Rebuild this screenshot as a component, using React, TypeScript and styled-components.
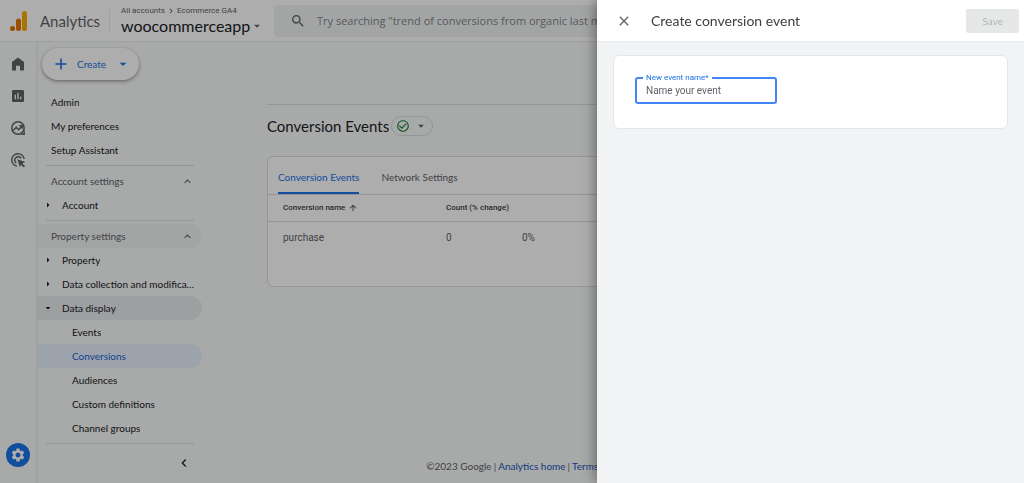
import React, { useState } from 'react';
import styled, { createGlobalStyle, css } from 'styled-components';
import {
  MdArrowDropDown, MdArrowRight, MdArrowUpward, MdCheckCircleOutline, MdChevronLeft,
  MdChevronRight, MdClose, MdExpandLess, MdInsertChart, MdOutlineFeedback, MdSearch, MdSettings,
} from 'react-icons/md';

const display = 'Lato, "Open Sans", sans-serif';
const wide = '"Open Sans", Lato, sans-serif';
const body = 'Roboto, "Liberation Sans", sans-serif';

const GlobalStyle = createGlobalStyle`
  *, *::before, *::after { box-sizing: border-box; }
  body { margin: 0; background: #f8f9fa; color: #202124; font-family: ${body}; font-size: 10px; overflow: hidden; }
  button, input { font: inherit; color: inherit; }
  button { border: 0; padding: 0; background: none; display: flex; align-items: center; cursor: pointer; }
  a { text-decoration: none; color: inherit; }
  h1, h2, p, ul { margin: 0; padding: 0; font-weight: 400; }
  ul { list-style: none; }
  svg { flex: none; display: block; }
`;

const Page = styled.div`
  height: 100vh;
  display: flex;
  flex-direction: column;
`;
const Header = styled.header`
  flex: none;
  display: flex;
  align-items: center;
  height: 42px;
  padding: 0 10px;
  background: #fff;
  border-bottom: 1px solid #e8eaed;
`;
const Brand = styled.a`
  display: flex;
  align-items: center;
  gap: 12px;
  width: 99px;
  font-family: ${display};
  font-size: 15px;
  color: #5f6368;
`;
const Switcher = styled.div`
  display: flex;
  flex-direction: column;
  justify-content: center;
  width: 165px;
  height: 22px;
  padding-left: 11px;
  border-left: 1px solid #e8eaed;
`;
const Crumbs = styled.nav`
  display: flex;
  align-items: center;
  gap: 1px;
  font-size: 8px;
  line-height: 10px;
  color: #5f6368;
`;
const PropertyButton = styled.button`
  font-family: ${display};
  font-size: 16px;
  line-height: 20px;
  svg { color: #5f6368; }
`;
const SearchBox = styled.label`
  flex: 1;
  display: flex;
  align-items: center;
  gap: 11px;
  height: 32px;
  padding-left: 16px;
  background: #f1f3f4;
  border-radius: 4px;
  color: #5f6368;
  font-family: ${wide};
  font-size: 11px;
  input { flex: 1; border: 0; background: none; outline: 0; padding: 0; }
  input::placeholder { color: #80868b; opacity: 1; }
`;
const Body = styled.div`
  flex: 1;
  min-height: 0;
  display: flex;
`;
const Rail = styled.nav`
  flex: none;
  width: 38px;
  display: flex;
  flex-direction: column;
  align-items: center;
  gap: 16px;
  padding: 14px 0 16px;
  border-right: 2px solid #eceef0;
  color: #5f6368;
`;
const RailLink = styled.a<{ $current?: boolean }>`
  display: grid;
  place-items: center;
  width: 16px;
  height: 16px;
  ${p => p.$current && css`
    width: 24px;
    height: 24px;
    margin-top: auto;
    border-radius: 50%;
    background: #1a73e8;
    color: #fff;
  `}
`;
const Sidebar = styled.nav`
  flex: none;
  width: 164px;
  display: flex;
  flex-direction: column;
  align-items: flex-start;
  padding-top: 6px;
  font-family: ${display};
`;
const CreateButton = styled.button`
  height: 32px;
  margin: 0 0 10px 4px;
  padding: 0 8px 0 12px;
  border-radius: 16px;
  background: #fff;
  color: #1a73e8;
  box-shadow: 0 1px 3px rgba(60, 64, 67, .4), 0 2px 4px rgba(60, 64, 67, .2);
  span { margin: 0 9px; }
`;
const NavList = styled.ul`
  width: 100%;
`;
const Rule = styled.hr`
  width: 148px;
  margin: 3px 8px;
  border: 0;
  border-top: 1px solid #dadce0;
`;
const Group = styled.button<{ $shaded?: boolean }>`
  width: 100%;
  height: 24px;
  padding: 0 8px 0 13px;
  justify-content: space-between;
  border-radius: 0 12px 12px 0;
  color: #5f6368;
  background: ${p => (p.$shaded ? '#f1f3f4' : 'transparent')};
`;
const indent = { top: 13, branch: 4, leaf: 34 };
const NavLink = styled.a<{ $level: keyof typeof indent; $tone?: 'open' | 'active' }>`
  display: flex;
  align-items: center;
  gap: 8px;
  height: 24px;
  padding: 0 6px 0 ${p => indent[p.$level]}px;
  border-radius: 0 12px 12px 0;
  background: ${p => (p.$tone === 'open' ? '#e8eaed' : p.$tone === 'active' ? '#e8f0fe' : 'transparent')};
  color: ${p => (p.$tone === 'active' ? '#1967d2' : 'inherit')};
  span { overflow: hidden; text-overflow: ellipsis; white-space: nowrap; }
`;
const Collapse = styled.button`
  margin: 8px 10px 0 auto;
`;
const Main = styled.main`
  flex: 1;
  min-width: 0;
  display: flex;
  flex-direction: column;
  padding: 62px 65px 9px;
`;
const TitleBar = styled.div`
  display: flex;
  align-items: center;
  gap: 2px;
  height: 43px;
  border-top: 1px solid #dadce0;
  h1 { font-family: ${display}; font-size: 15px; }
`;
const StatusButton = styled.button`
  height: 20px;
  padding: 0 4px;
  gap: 4px;
  border: 1px solid #dadce0;
  border-radius: 10px;
  color: #5f6368;
`;
const Card = styled.section`
  background: #fff;
  border: 1px solid #dadce0;
  border-radius: 6px;
`;
const EventsCard = styled(Card)`
  height: 131px;
  margin-top: 9px;
`;
const Tabs = styled.div`
  display: flex;
  gap: 22px;
  height: 38px;
  padding: 0 10px;
  border-bottom: 1px solid #dadce0;
  font-family: ${display};
`;
const Tab = styled.button<{ $selected?: boolean }>`
  padding-top: 4px;
  border-bottom: 2px solid ${p => (p.$selected ? '#1a73e8' : 'transparent')};
  color: ${p => (p.$selected ? '#1a73e8' : '#5f6368')};
`;
const Table = styled.table`
  width: 100%;
  border-collapse: collapse;
  table-layout: fixed;
  text-align: left;
  color: #5f6368;
  th { height: 26px; padding: 0; font-size: 8px; font-weight: 500; color: #3c4043; border-bottom: 1px solid #dadce0; }
  td { height: 32px; padding: 0; }
  th:first-child, td:first-child { padding-left: 15px; }
`;
const NameCol = styled.col`
  width: 178px;
`;
const CountCol = styled.col`
  width: 76px;
`;
const SortLabel = styled.span`
  display: flex;
  align-items: center;
  gap: 3px;
`;
const Footer = styled.footer`
  display: flex;
  justify-content: center;
  gap: 2px;
  margin-top: auto;
  font-family: ${display};
  line-height: 16px;
  color: #5f6368;
  white-space: nowrap;
  a { display: flex; align-items: center; gap: 4px; color: #1a56b8; }
`;
const Scrim = styled.div`
  position: fixed;
  inset: 0;
  display: flex;
  justify-content: flex-end;
  background: rgba(0, 0, 0, .32);
`;
const Drawer = styled.aside`
  width: 427px;
  max-width: 100%;
  background: #f1f3f4;
  box-shadow: 0 0 14px rgba(0, 0, 0, .5);
`;
const DrawerHeader = styled.header`
  display: flex;
  align-items: center;
  gap: 19px;
  height: 42px;
  padding: 0 5px 0 19px;
  background: #fff;
  border-bottom: 1px solid #e8eaed;
  color: #5f6368;
  h2 { flex: 1; font-family: ${display}; font-size: 14px; color: #3c4043; }
`;
const SaveButton = styled.button`
  height: 24px;
  padding: 0 16px;
  border-radius: 2px;
  background: #e6e8e8;
  color: #b0b3b5;
  font-family: ${display};
`;
const FormCard = styled(Card)`
  margin: 13px 16px;
  padding: 16px 21px 24px;
  border-color: #e4e7ea;
`;
const Field = styled.fieldset`
  width: 142px;
  height: 32px;
  margin: 0;
  padding: 0 6px;
  border: 2px solid #4285f4;
  border-radius: 3px;
  legend { padding: 0 3px; font-size: 8px; line-height: 12px; color: #1a73e8; }
  input { display: block; width: 100%; height: 12px; padding: 0 3px; border: 0; outline: 0; background: none; }
  input::placeholder { color: #5f6368; opacity: 1; }
`;

const AnalyticsLogo = () => (
  <svg width="18" height="20" viewBox="0 0 18 20" aria-hidden="true">
    <rect x="12" y="0" width="5" height="20" rx="2.5" fill="#f9ab00" />
    <rect x="6" y="7.5" width="5" height="12.5" rx="2.5" fill="#e37400" />
    <circle cx="2.5" cy="17.5" r="2.5" fill="#e37400" />
  </svg>
);
const HomeIcon = () => (
  <svg width="16" height="16" viewBox="0 0 16 16" fill="currentColor" aria-hidden="true">
    <path d="M8 1.5 2 6v7.400c0 .6.400 1 1 1h3V9.800h4v4.600h3c.6 0 1-.4 1-1V6Z" />
  </svg>
);
const ExploreIcon = () => (
  <svg width="16" height="16" viewBox="0 0 24 24" fill="none" stroke="currentColor" strokeWidth="2.2" aria-hidden="true">
    <circle cx="12" cy="12" r="9.3" />
    <path d="M5 15.500l4.500-4.500 3.500 3.500 4.500-4.800M13.800 8.500h4.700V13" />
    <path d="M22.400 13.500v8.900H13.500c5 0 8.400-4 8.900-8.900Z" fill="currentColor" stroke="none" />
  </svg>
);
const TargetIcon = () => (
  <svg width="16" height="16" viewBox="0 0 24 24" fill="none" stroke="currentColor" strokeWidth="2.2" aria-hidden="true">
    <path d="M10.500 21.200A9.300 9.300 0 1 1 21.200 10.500" />
    <path d="M9.300 16.600A5.200 5.200 0 1 1 16.700 9.600" />
    <path d="M11 11l12 4-4.600 2.200 4.100 4.100-1.800 1.800-4.100-4.100L15 23Z" fill="currentColor" stroke="none" />
  </svg>
);
const PlusIcon = () => (
  <svg width="14" height="14" viewBox="0 0 14 14" stroke="currentColor" strokeWidth="1.5" aria-hidden="true">
    <path d="M7 1.500v11M1.500 7h11" />
  </svg>
);

const general = ['Admin', 'My preferences', 'Setup Assistant'];
const leaves = ['Events', 'Conversions', 'Audiences', 'Custom definitions', 'Channel groups'];

function Branch({ label, open }: { label: string; open?: boolean }) {
  const Arrow = open ? MdArrowDropDown : MdArrowRight;
  return (
    <li>
      <NavLink href="#" $level="branch" $tone={open ? 'open' : undefined}>
        <Arrow size={12} />
        <span>{label}</span>
      </NavLink>
    </li>
  );
}

export default function App() {
  const [name, setName] = useState('');
  return (
    <>
      <GlobalStyle />
      <Page>
        <Header>
          <Brand href="#"><AnalyticsLogo />Analytics</Brand>
          <Switcher>
            <Crumbs aria-label="Account path">
              <a href="#">All accounts</a><MdChevronRight size={10} /><a href="#">Ecommerce GA4</a>
            </Crumbs>
            <PropertyButton>woocommerceapp<MdArrowDropDown size={14} /></PropertyButton>
          </Switcher>
          <SearchBox>
            <MdSearch size={16} />
            <input type="search" aria-label="Search" placeholder={'Try searching "trend of conversions from organic last month"'} />
          </SearchBox>
        </Header>
        <Body>
          <Rail aria-label="Sections">
            <RailLink href="#" aria-label="Home"><HomeIcon /></RailLink>
            <RailLink href="#" aria-label="Reports"><MdInsertChart size={16} /></RailLink>
            <RailLink href="#" aria-label="Explore"><ExploreIcon /></RailLink>
            <RailLink href="#" aria-label="Advertising"><TargetIcon /></RailLink>
            <RailLink href="#" aria-label="Admin" $current><MdSettings size={16} /></RailLink>
          </Rail>
          <Sidebar aria-label="Admin">
            <CreateButton><PlusIcon /><span>Create</span><MdArrowDropDown size={16} /></CreateButton>
            <NavList>
              {general.map(t => <li key={t}><NavLink href="#" $level="top"><span>{t}</span></NavLink></li>)}
            </NavList>
            <Rule />
            <Group>Account settings<MdExpandLess size={13} /></Group>
            <NavList><Branch label="Account" /></NavList>
            <Rule />
            <Group $shaded>Property settings<MdExpandLess size={13} /></Group>
            <NavList>
              <Branch label="Property" />
              <Branch label="Data collection and modification" />
              <Branch label="Data display" open />
              {leaves.map(t => (
                <li key={t}>
                  <NavLink href="#" $level="leaf" $tone={t === 'Conversions' ? 'active' : undefined}><span>{t}</span></NavLink>
                </li>
              ))}
            </NavList>
            <Rule />
            <Collapse aria-label="Collapse menu"><MdChevronLeft size={16} /></Collapse>
          </Sidebar>
          <Main>
            <TitleBar>
              <h1>Conversion Events</h1>
              <StatusButton aria-label="Status">
                <MdCheckCircleOutline size={14} color="#188038" /><MdArrowDropDown size={14} />
              </StatusButton>
            </TitleBar>
            <EventsCard>
              <Tabs role="tablist">
                <Tab role="tab" aria-selected="true" $selected>Conversion Events</Tab>
                <Tab role="tab" aria-selected="false">Network Settings</Tab>
              </Tabs>
              <Table>
                <colgroup><NameCol /><CountCol /><col /></colgroup>
                <thead>
                  <tr>
                    <th><SortLabel>Conversion name<MdArrowUpward size={10} /></SortLabel></th>
                    <th colSpan={2}>Count (% change)</th>
                  </tr>
                </thead>
                <tbody><tr><td>purchase</td><td>0</td><td>0%</td></tr></tbody>
              </Table>
            </EventsCard>
            <Footer>
              <span>©2023 Google</span> | <a href="#">Analytics home</a> | <a href="#">Terms of Service</a> | <a href="#">Privacy Policy</a> | <a href="#"><MdOutlineFeedback size={14} />Send feedback</a>
            </Footer>
          </Main>
        </Body>
      </Page>
      <Scrim>
        <Drawer role="dialog" aria-labelledby="drawer-title">
          <DrawerHeader>
            <button aria-label="Close"><MdClose size={16} /></button>
            <h2 id="drawer-title">Create conversion event</h2>
            <SaveButton disabled>Save</SaveButton>
          </DrawerHeader>
          <FormCard>
            <Field>
              <legend><label htmlFor="event-name">New event name*</label></legend>
              <input id="event-name" value={name} onChange={e => setName(e.target.value)} placeholder="Name your event" />
            </Field>
          </FormCard>
        </Drawer>
      </Scrim>
    </>
  );
}
